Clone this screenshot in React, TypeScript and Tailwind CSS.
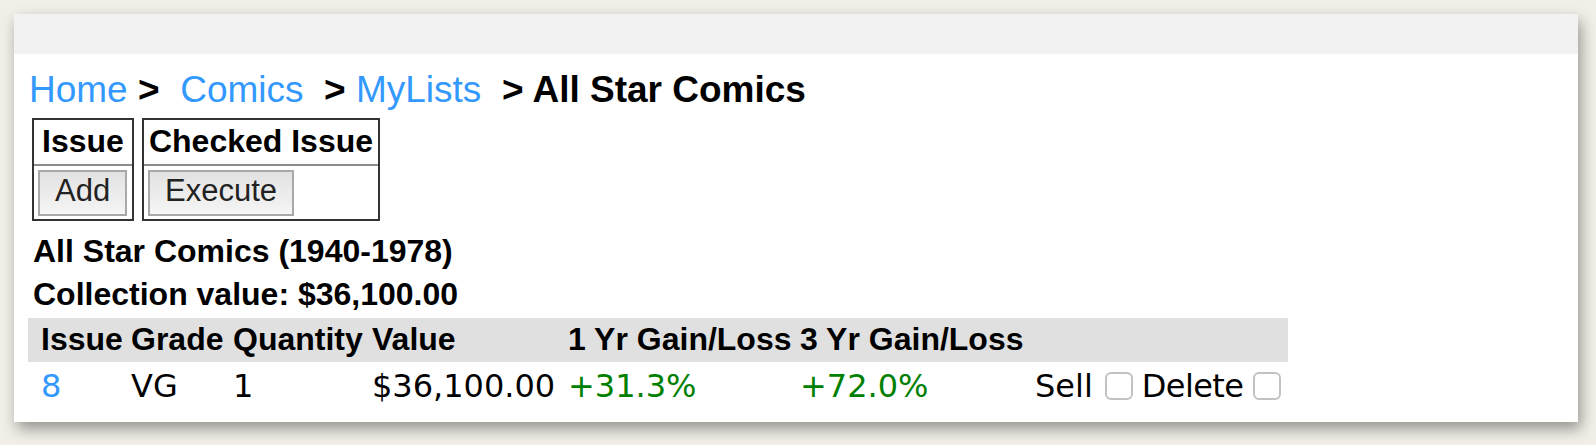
import React from "react";

const headers = [
  "Issue",
  "Grade",
  "Quantity",
  "Value",
  "1 Yr Gain/Loss",
  "3 Yr Gain/Loss",
  "",
];

const rows = [
  {
    issue: "8",
    grade: "VG",
    quantity: "1",
    value: "$36,100.00",
    oneYear: "+31.3%",
    threeYear: "+72.0%",
  },
];

function Checkbox() {
  return (
    <span className="inline-block h-[28px] w-[28px] rounded-[6px] border-2 border-[#c2c2c2] bg-white" />
  );
}

function GrayButton({ label }: { label: string }) {
  return (
    <button className="block h-[46px] border-2 border-[#a9a9a9] bg-linear-to-b from-[#e2e2e2] to-[#f5f5f5] px-[15px] pb-[4px] text-[31px] leading-[38px] text-[#222]">
      {label}
    </button>
  );
}

export default function App() {
  return (
    <div className="min-h-screen bg-[#f2efe8] pt-[14px] pl-[14px] font-['Liberation_Sans',Arial,sans-serif] text-black">
      <div className="h-[408px] w-[1564px] bg-white shadow-[3px_7px_14px_rgba(0,0,0,0.38)]">
        <div className="h-[40px] bg-[#f2f2f2]" />
        <div className="pl-[14px]">
          <div className="ml-[1px] mt-[16px] whitespace-pre text-[37px] leading-[40px]">
            <a className="text-[#3399ff]">Home</a>
            <span className="font-bold"> &gt;  </span>
            <a className="text-[#3399ff]">Comics</a>
            <span className="font-bold">  &gt; </span>
            <a className="text-[#3399ff]">MyLists</a>
            <span className="font-bold">  &gt; All Star Comics</span>
          </div>

          <div className="ml-[4px] mt-[8px] flex gap-[8px]">
            <div className="h-[103px] w-[102px] border-2 border-[#333]">
              <div className="h-[46px] border-b-2 border-[#8c8c8c] text-center text-[32px] font-bold leading-[42px]">
                Issue
              </div>
              <div className="pl-[4px] pt-[4px]">
                <GrayButton label="Add" />
              </div>
            </div>
            <div className="h-[103px] w-[238px] border-2 border-[#333]">
              <div className="h-[46px] border-b-2 border-[#8c8c8c] text-center text-[32px] font-bold leading-[42px]">
                Checked Issue
              </div>
              <div className="pl-[4px] pt-[4px]">
                <GrayButton label="Execute" />
              </div>
            </div>
          </div>

          <div className="ml-[5px] mt-[9px] text-[32px] font-bold leading-[43px]">
            <div>All Star Comics (1940-1978)</div>
            <div>Collection value: $36,100.00</div>
          </div>

          <div className="mt-[2px] w-[1260px]">
            <div className="grid h-[44px] grid-cols-[90px_102px_139px_196px_232px_235px_1fr] bg-[#e0e0e0] pl-[13px] text-[32px] font-bold leading-[42px]">
              {headers.map((h, i) => (
                <div key={i} className="whitespace-nowrap">
                  {h}
                </div>
              ))}
            </div>
            {rows.map((r) => (
              <div
                key={r.issue}
                className="grid h-[48px] grid-cols-[90px_102px_139px_196px_232px_235px_1fr] pl-[13px] font-['DejaVu_Sans',Verdana,sans-serif] text-[32px] leading-[48px]"
              >
                <div className="text-[#3399ff]">{r.issue}</div>
                <div>{r.grade}</div>
                <div>{r.quantity}</div>
                <div>{r.value}</div>
                <div className="text-[#008000]">{r.oneYear}</div>
                <div className="text-[#008000]">{r.threeYear}</div>
                <div className="flex items-center">
                  <span>Sell</span>
                  <span className="ml-[12px] flex">
                    <Checkbox />
                  </span>
                  <span className="ml-[9px] tracking-[-0.6px]">Delete</span>
                  <span className="ml-[10px] flex">
                    <Checkbox />
                  </span>
                </div>
              </div>
            ))}
          </div>
        </div>
      </div>
    </div>
  );
}
